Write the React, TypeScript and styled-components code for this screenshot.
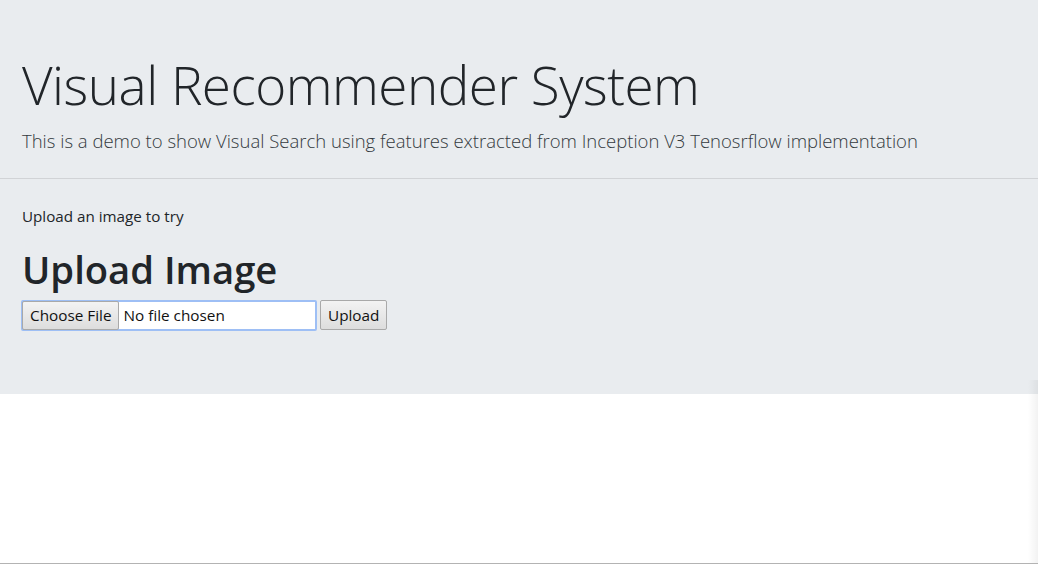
import React from "react";
import styled, { createGlobalStyle } from "styled-components";

const Global = createGlobalStyle`
  html, body { margin: 0; padding: 0; background: #fff; }
  body { font-family: "Open Sans", "Liberation Sans", sans-serif; color: #212529; }
  * { box-sizing: border-box; }
`;

const Page = styled.div`
  height: 564px;
  position: relative;
  border-bottom: 1px solid #b3b3b3;
  overflow: hidden;
`;

const Jumbotron = styled.header`
  background: #e9ecef;
  padding: 53px 0 63px 22px;
`;

const Title = styled.h1`
  margin: 0;
  font-family: "Open Sans", sans-serif;
  font-weight: 300;
  font-size: 53px;
  line-height: 1.2;
  color: #212529;
  letter-spacing: -0.5px;
`;

const Lead = styled.p`
  margin: 10px 0 0;
  font-weight: 300;
  font-size: 18.5px;
  line-height: 1.5;
  color: #343a40;
`;

const Rule = styled.hr`
  margin: 24px 0 26px -22px;
  border: 0;
  border-top: 1px solid #d1d3d6;
`;

const Hint = styled.p`
  margin: 0;
  font-size: 15.2px;
  line-height: 1.5;
`;

const Heading = styled.h2`
  margin: 19px 0 7px;
  font-size: 38.2px;
  font-weight: 600;
  line-height: 1.2;
`;

const Row = styled.form`
  display: flex;
  align-items: center;
  gap: 3px;
  margin-left: -1px;
`;

const FileBox = styled.label`
  display: flex;
  width: 296px;
  height: 31px;
  border: 2px solid #9ebff5;
  border-radius: 2px;
  background: #fff;
  align-items: stretch;
  cursor: pointer;
`;

const NativeButton = styled.span`
  display: flex;
  align-items: center;
  padding: 0 7px;
  font-family: "Open Sans", sans-serif;
  font-size: 15.3px;
  color: #111;
  background: linear-gradient(#f3f3f3, #dddddd);
  border: 1px solid #a9a9a9;
  border-radius: 2px;
  margin: -1px 0 -1px -1px;
`;

const FileName = styled.span`
  display: flex;
  align-items: center;
  padding-left: 4px;
  font-size: 15.3px;
  color: #111;
`;

const SubmitButton = styled.button`
  height: 30px;
  padding: 0 7px;
  font-family: "Open Sans", sans-serif;
  font-size: 15.3px;
  color: #111;
  background: linear-gradient(#f3f3f3, #dddddd);
  border: 1px solid #a9a9a9;
  border-radius: 2px;
`;

const EdgeShade = styled.div`
  position: absolute;
  right: 0;
  top: 380px;
  bottom: 0;
  width: 10px;
  background: linear-gradient(to right, rgba(0,0,0,0), rgba(0,0,0,0.05));
`;

export default function App() {
  return (
    <Page>
      <Global />
      <Jumbotron>
        <Title>Visual Recommender System</Title>
        <Lead>This is a demo to show Visual Search using features extracted from Inception V3 Tenosrflow implementation</Lead>
        <Rule />
        <Hint>Upload an image to try</Hint>
        <Heading>Upload Image</Heading>
        <Row onSubmit={(e) => e.preventDefault()}>
          <FileBox>
            <NativeButton>Choose File</NativeButton>
            <FileName>No file chosen</FileName>
          </FileBox>
          <SubmitButton type="submit">Upload</SubmitButton>
        </Row>
      </Jumbotron>
      <EdgeShade />
    </Page>
  );
}
